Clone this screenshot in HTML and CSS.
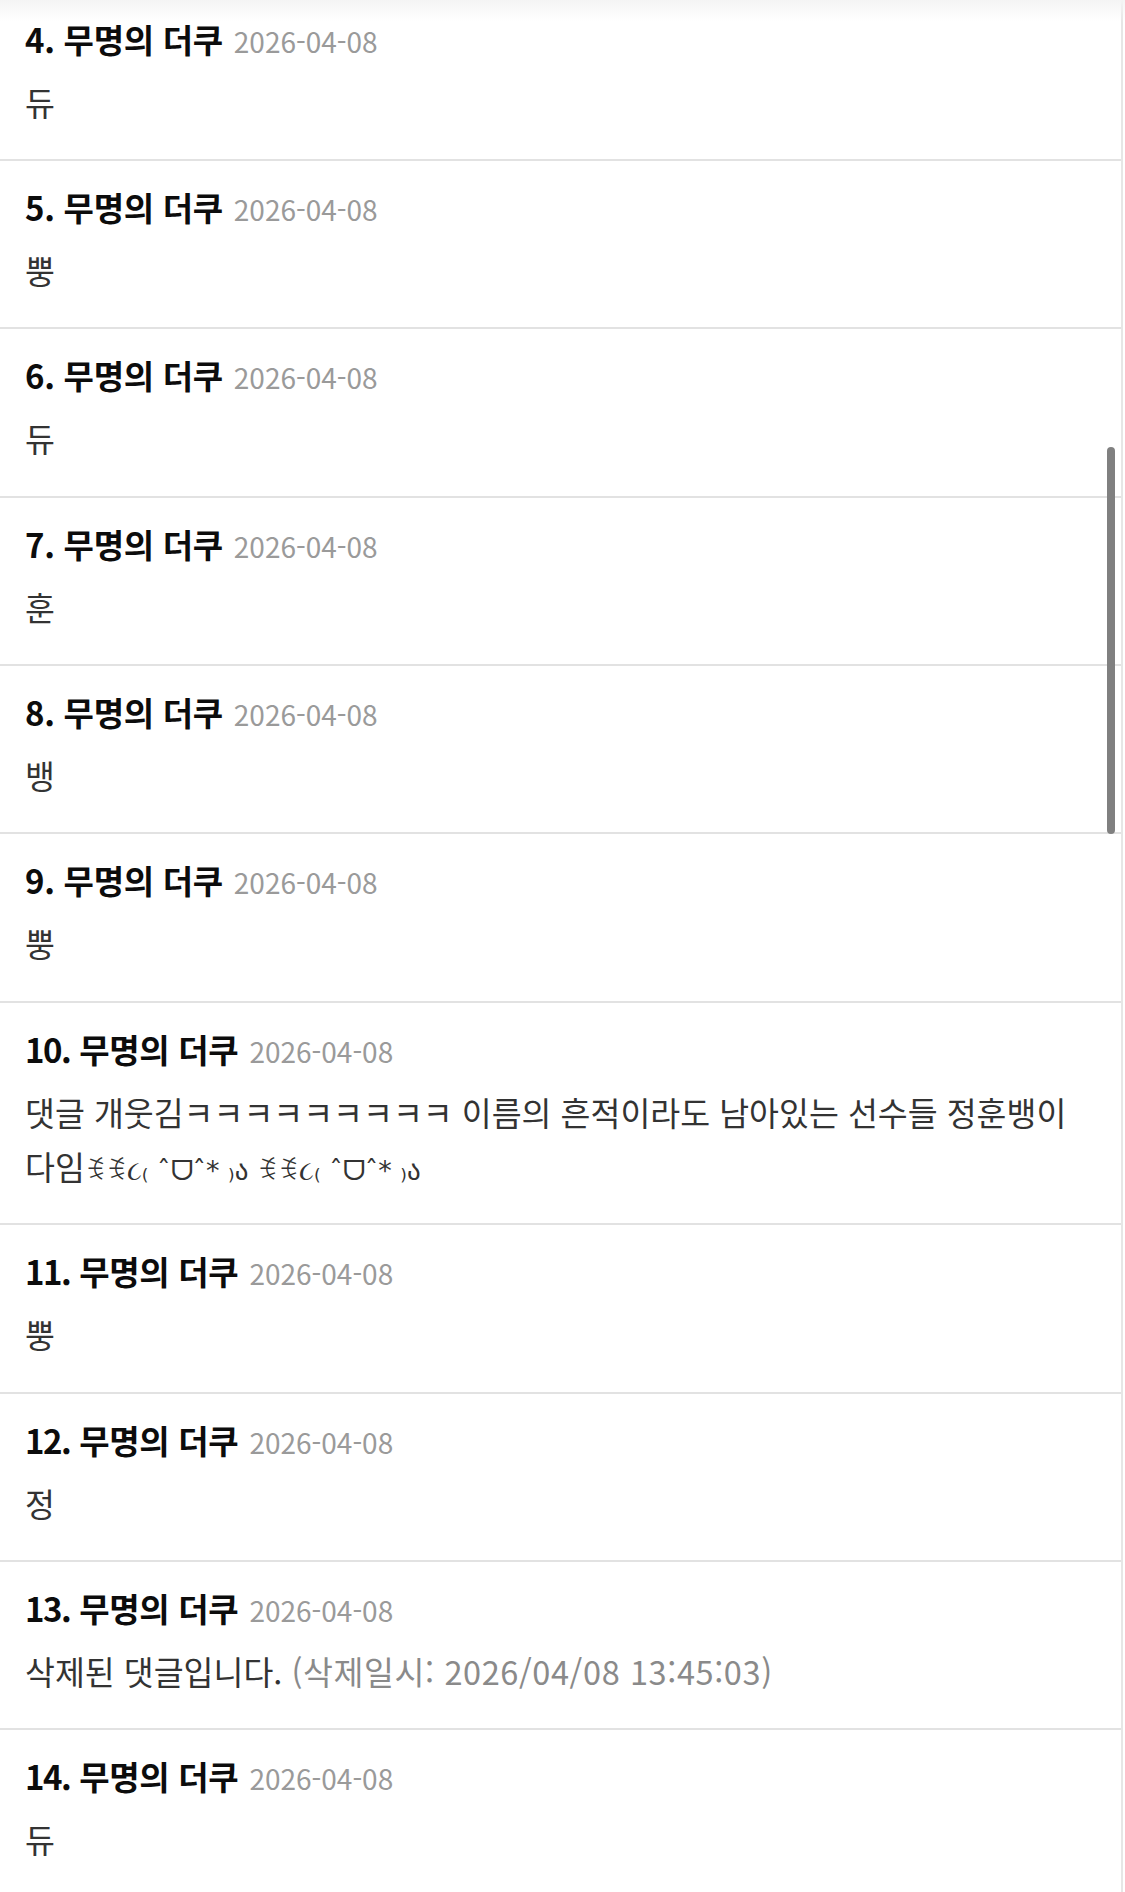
FILE: index.html
```html
<!DOCTYPE html>
<html lang="ko">
<head>
<meta charset="utf-8">
<link rel="stylesheet" href="styles.css">
</head>
<body>
<div class="page">
  <div class="top-shade"></div>
  <ul class="comments">
    <li class="comment first">
      <div class="head"><span class="name">4. 무명의 더쿠</span><span class="date">2026-04-08</span></div>
      <div class="body">듀</div>
    </li>
    <li class="comment">
      <div class="head"><span class="name">5. 무명의 더쿠</span><span class="date">2026-04-08</span></div>
      <div class="body">뿡</div>
    </li>
    <li class="comment">
      <div class="head"><span class="name">6. 무명의 더쿠</span><span class="date">2026-04-08</span></div>
      <div class="body">듀</div>
    </li>
    <li class="comment">
      <div class="head"><span class="name">7. 무명의 더쿠</span><span class="date">2026-04-08</span></div>
      <div class="body">훈</div>
    </li>
    <li class="comment">
      <div class="head"><span class="name">8. 무명의 더쿠</span><span class="date">2026-04-08</span></div>
      <div class="body">뱅</div>
    </li>
    <li class="comment">
      <div class="head"><span class="name">9. 무명의 더쿠</span><span class="date">2026-04-08</span></div>
      <div class="body">뿡</div>
    </li>
    <li class="comment">
      <div class="head"><span class="name"><span class="num">10.</span> 무명의 더쿠</span><span class="date">2026-04-08</span></div>
      <div class="body">댓글 개웃김ㅋㅋㅋㅋㅋㅋㅋㅋㅋ 이름의 흔적이라도 남아있는 선수들 정훈뱅이 <span class="nowrap">다임<span class="kao">ꉂꉂ૮₍ ˆᗜˆ* ₎ა ꉂꉂ૮₍ ˆᗜˆ* ₎ა</span></span></div>
    </li>
    <li class="comment">
      <div class="head"><span class="name"><span class="num">11.</span> 무명의 더쿠</span><span class="date">2026-04-08</span></div>
      <div class="body">뿡</div>
    </li>
    <li class="comment">
      <div class="head"><span class="name"><span class="num">12.</span> 무명의 더쿠</span><span class="date">2026-04-08</span></div>
      <div class="body">정</div>
    </li>
    <li class="comment">
      <div class="head"><span class="name"><span class="num">13.</span> 무명의 더쿠</span><span class="date">2026-04-08</span></div>
      <div class="body">삭제된 댓글입니다. <span class="deleted">(삭제일시: 2026/04/08 13:45:03)</span></div>
    </li>
    <li class="comment">
      <div class="head"><span class="name"><span class="num">14.</span> 무명의 더쿠</span><span class="date">2026-04-08</span></div>
      <div class="body">듀</div>
    </li>
  </ul>
  <div class="scrollbar"></div>
</div>
</body>
</html>
```
FILE: styles.css
```css
html, body {
  margin: 0;
  padding: 0;
  background: #ffffff;
}
body {
  font-family: "Noto Sans CJK KR", "Noto Sans", sans-serif;
  color: #111;
}
.page {
  position: relative;
  width: 1125px;
  height: 1892px;
  overflow: hidden;
}
.top-shade {
  position: absolute;
  left: 0;
  top: 0;
  width: 100%;
  height: 22px;
  background: linear-gradient(#f4f4f4, rgba(255,255,255,0));
  pointer-events: none;
  z-index: 1;
}
.comments {
  list-style: none;
  margin: 0;
  padding: 0;
  width: 1121px;
  border-right: 2px solid #e6e6e6;
}
.comment {
  padding: 22px 26px 30.4px 25px;
  border-bottom: 2px solid #e2e2e2;
}
.comment.first {
  padding-top: 14.5px;
}
.head {
  display: flex;
  align-items: baseline;
  gap: 11px;
  line-height: 48px;
  height: 48px;
  margin-bottom: 12px;
}
.name {
  font-size: 33px;
  font-weight: 700;
  color: #0c0c0c;
  letter-spacing: -0.3px;
}
.num {
  letter-spacing: -1.5px;
}
.date {
  font-size: 28px;
  color: #9a9a9a;
  font-weight: 400;
}
.body {
  font-size: 32.5px;
  line-height: 54px;
  color: #333333;
}
.nowrap {
  white-space: nowrap;
}
.kao {
  font-family: "DejaVu Sans", "Noto Sans", sans-serif;
  font-size: 27px;
  line-height: 1;
}
.deleted {
  color: #8a8a8a;
  letter-spacing: 0.6px;
}
.scrollbar {
  position: absolute;
  left: 1107px;
  top: 447px;
  width: 8px;
  height: 387px;
  border-radius: 4px;
  background: #808080;
}
```
